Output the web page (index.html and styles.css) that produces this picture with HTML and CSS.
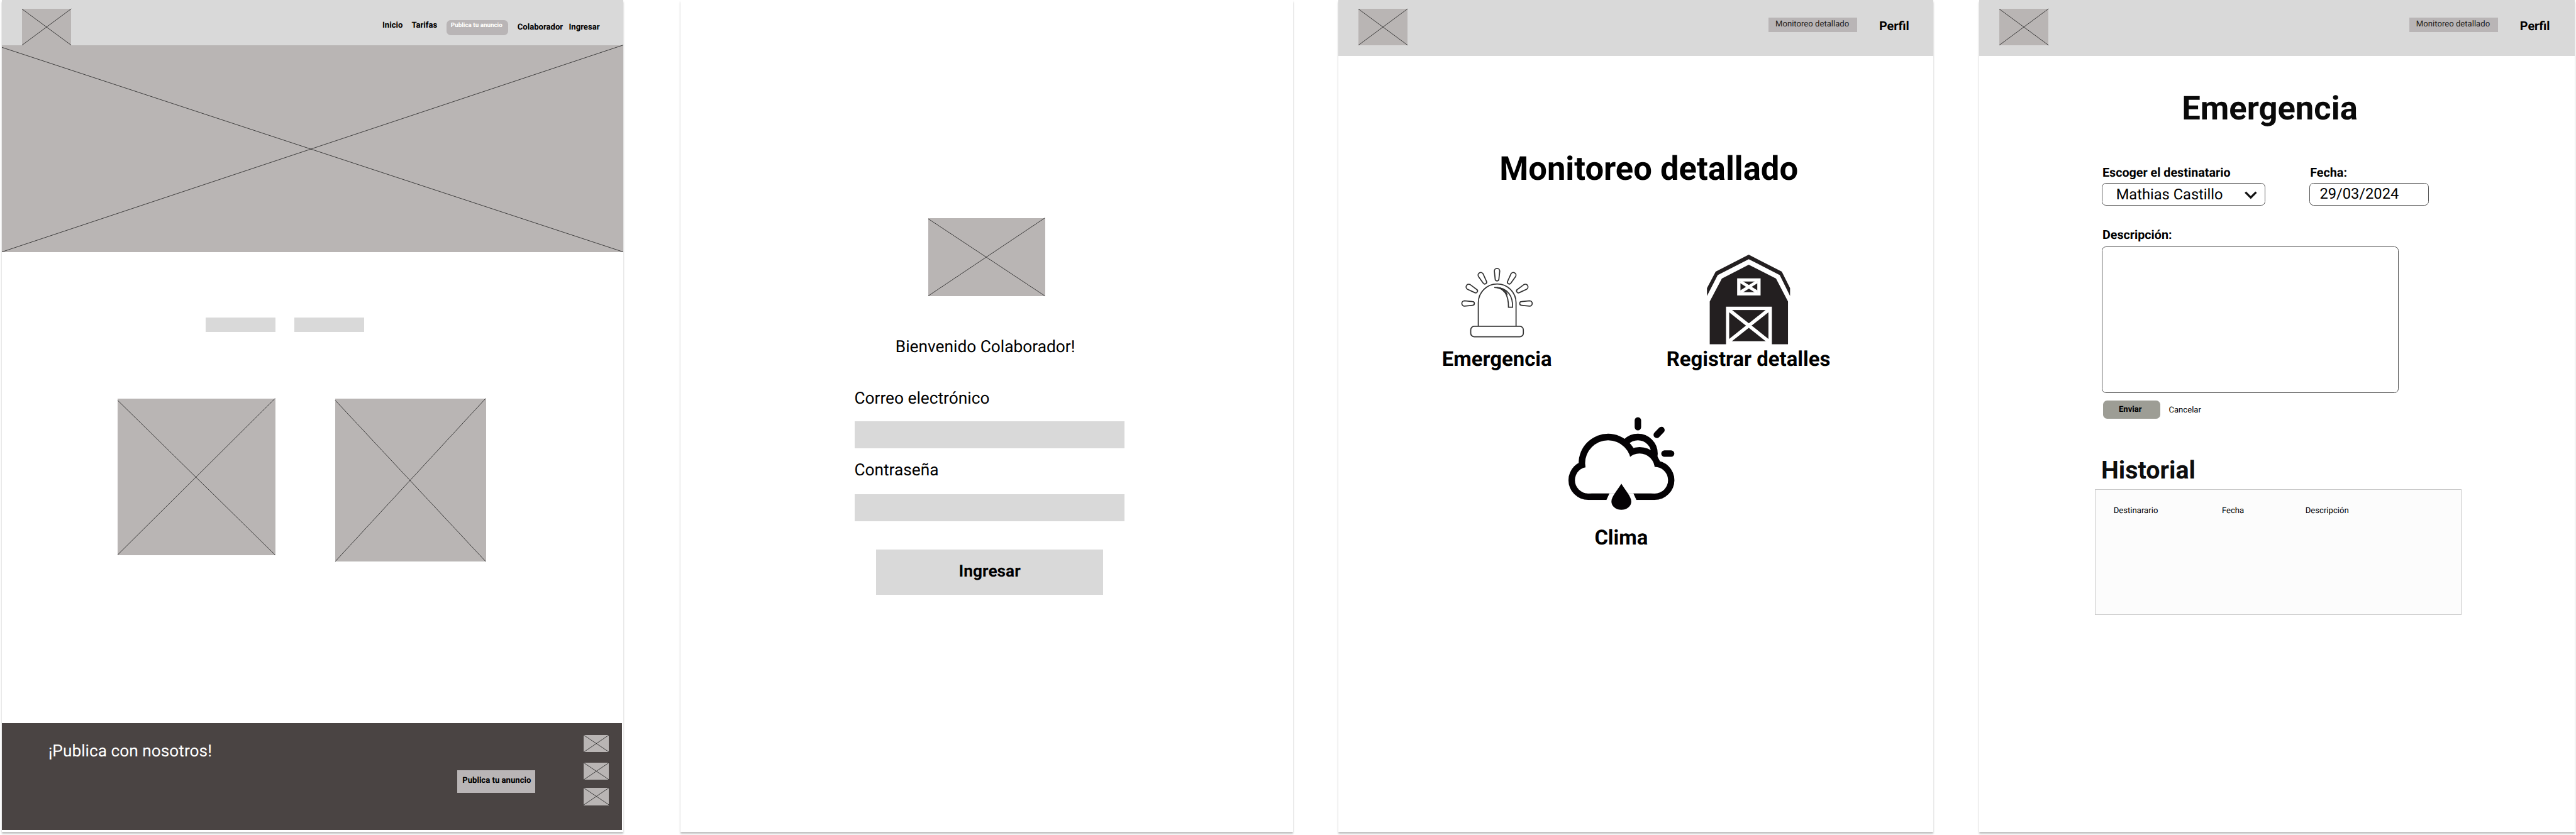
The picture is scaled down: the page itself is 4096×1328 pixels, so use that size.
FILE: index.html
```html
<!DOCTYPE html>
<html lang="es">
<head>
<meta charset="utf-8">
<title>Wireframes</title>
<link rel="stylesheet" href="styles.css">
</head>
<body>
<main class="canvas">

  <section class="board board-home">
    <header class="bar bar-home">
      <div class="ph ph-logo"><svg viewBox="0 0 119 88"><path d="M0 .5L119 88M119 0L0 88"/></svg></div>
      <a class="nav nav-high">Inicio</a>
      <a class="nav nav-high">Tarifas</a>
      <a class="nav-cta">Publica tu anuncio</a>
      <a class="nav nav-low">Colaborador</a>
      <a class="nav nav-mid">Ingresar</a>
    </header>
    <div class="ph ph-hero"><svg viewBox="0 0 1503 500"><path d="M0 5L1503 500M1503 -.5L0 500"/></svg></div>
    <div class="chips"><span class="chip"></span><span class="chip"></span></div>
    <div class="cards">
      <div class="ph ph-card-a"><svg viewBox="0 0 381 378"><path d="M0 4L381 378M381 -.5L0 378"/></svg></div>
      <div class="ph ph-card-b"><svg viewBox="0 0 364 394"><path d="M0 4L364 394M364 -.5L0 394"/></svg></div>
    </div>
    <footer class="footer">
      <p class="footer-title">¡Publica con nosotros!</p>
      <a class="footer-cta">Publica tu anuncio</a>
      <div class="socials">
        <div class="ph ph-social"><svg viewBox="0 0 62 42"><path d="M0 0L62 41.5M62 -.5L0 41.5"/></svg></div>
        <div class="ph ph-social"><svg viewBox="0 0 62 42"><path d="M0 0L62 41.5M62 -.5L0 41.5"/></svg></div>
        <div class="ph ph-social ph-social-last"><svg viewBox="0 0 62 42"><path d="M0 0L62 41.5M62 -.5L0 41.5"/></svg></div>
      </div>
    </footer>
  </section>

  <section class="board board-login">
    <div class="ph ph-login"><svg viewBox="0 0 282 188"><path d="M0 1.5L282 188M282 -.5L0 188"/></svg></div>
    <p class="welcome">Bienvenido Colaborador!</p>
    <p class="login-label">Correo electrónico</p>
    <div class="login-input"></div>
    <p class="login-label login-label-second">Contraseña</p>
    <div class="login-input login-input-second"></div>
    <div class="login-submit">Ingresar</div>
  </section>

  <section class="board board-monitor">
    <header class="bar bar-app">
      <div class="ph ph-logo"><svg viewBox="0 0 119 88"><path d="M0 .5L119 88M119 0L0 88"/></svg></div>
      <a class="tag">Monitoreo detallado</a>
      <a class="profile">Perfil</a>
    </header>
    <h1 class="title title-monitor">Monitoreo detallado</h1>
    <div class="options">
      <div class="option">
        <svg class="icon-lamp" viewBox="0 0 630 630">
          <defs><path id="ray" d="M-19.5 0A19.5 19.5 0 0 1 19.5 0L13.5 58A13.5 13.5 0 0 1-13.5 58Z"/></defs>
          <path d="M167 478V308a137 136 0 0 1 274 0V478"/>
          <rect x="112" y="479" width="382" height="76" rx="26"/>
          <path d="M283 197C350 198 387 245 386 341H416C418 270 390 196 283 197Z"/>
          <path d="M300 197C345 203 366 222 377 250C366 220 345 200 300 197Z"/>
          <use href="#ray" transform="translate(67 313) rotate(-90)"/>
          <use href="#ray" transform="translate(98 193) rotate(-59)"/>
          <use href="#ray" transform="translate(185 108) rotate(-30)"/>
          <use href="#ray" transform="translate(303 78)"/>
          <use href="#ray" transform="translate(421 108) rotate(30)"/>
          <use href="#ray" transform="translate(508 193) rotate(59)"/>
          <use href="#ray" transform="translate(539 313) rotate(90)"/>
        </svg>
        <p class="option-label">Emergencia</p>
      </div>
      <div class="option">
        <svg class="icon-barn" viewBox="0 0 690 690">
          <g fill="#231f20">
            <path d="M345 32L585 155L645 275V332L570 180L345 65L120 180L42 332V275L105 155Z"/>
            <path d="M345 105L543 205L630 372V682H513V410H180V682H62V372L150 205Z"/>
          </g>
          <rect x="261" y="204" width="170" height="124" fill="#fff"/>
          <rect x="285" y="227" width="122" height="77" fill="#231f20"/>
          <rect x="203" y="434" width="285" height="226" fill="#231f20"/>
          <path d="M285 227L407 304M407 227L285 304" stroke="#fff" stroke-width="22"/>
          <path d="M203 434L488 660M488 434L203 660" stroke="#fff" stroke-width="26"/>
        </svg>
        <p class="option-label">Registrar detalles</p>
      </div>
    </div>
    <div class="option option-weather">
      <svg class="icon-weather" viewBox="0 0 840 810">
        <circle cx="531" cy="294" r="120.5" fill="#fff" stroke="#040204" stroke-width="47"/>
        <g fill="#040204">
          <circle cx="315" cy="364" r="214"/><circle cx="543" cy="403" r="157"/>
          <circle cx="170" cy="487" r="143"/><circle cx="653" cy="487" r="143"/>
          <rect x="170" y="400" width="483" height="230"/>
        </g>
        <g fill="#fff">
          <circle cx="315" cy="364" r="167"/><circle cx="543" cy="403" r="110"/>
          <circle cx="170" cy="487" r="96"/><circle cx="653" cy="487" r="97"/>
          <rect x="165" y="391" width="488" height="192"/>
          <path d="M325 582H498L521 632H302Z"/>
        </g>
        <path fill="#040204" d="M411 512C438 558 483 605 483 642A72 60 0 0 1 339 642C339 605 384 558 411 512Z"/>
        <path stroke="#040204" stroke-width="47" stroke-linecap="round" d="M531 53V102M702 123L668 158M724 294H772"/>
      </svg>
      <p class="option-label">Clima</p>
    </div>
  </section>

  <section class="board board-alert">
    <header class="bar bar-app">
      <div class="ph ph-logo"><svg viewBox="0 0 119 88"><path d="M0 .5L119 88M119 0L0 88"/></svg></div>
      <a class="tag">Monitoreo detallado</a>
      <a class="profile">Perfil</a>
    </header>
    <h1 class="title title-alert">Emergencia</h1>
    <form class="form">
      <div class="fields">
        <div>
          <p class="field-label">Escoger el destinatario</p>
          <div class="field field-select"><span>Mathias Castillo</span>
            <svg class="chevron" viewBox="0 0 30 20"><path d="M2 2.5L15 15.5L28 2.5"/></svg>
          </div>
        </div>
        <div>
          <p class="field-label">Fecha:</p>
          <div class="field field-date">29/03/2024</div>
        </div>
      </div>
      <p class="field-label field-label-desc">Descripción:</p>
      <div class="textarea"></div>
      <div class="actions"><span class="send">Enviar</span><span class="cancel">Cancelar</span></div>
      <h2 class="history-title">Historial</h2>
    </form>
    <div class="history"><span>Destinarario</span><span>Fecha</span><span>Descripción</span></div>
  </section>

</main>
</body>
</html>
```
FILE: styles.css
```css
/* 1rem equals 100 design units */
html { font-size: 65.736px; }
* { box-sizing: border-box; }
body { margin: 0; background: #fff; color: #000; font-family: Roboto, "Liberation Sans", sans-serif; overflow: hidden; text-rendering: geometricPrecision; }
p, h1, h2 { margin: 0; font-weight: 400; }
svg { display: block; overflow: visible; fill: none; }

.canvas { display: flex; width: 4096px; height: 1328px; padding-left: .04rem; line-height: 1.2; white-space: nowrap; }
.board { flex: none; display: flex; flex-direction: column; align-items: flex-start; height: 20.12rem; background: #fff; box-shadow: 0 .04rem .04rem rgba(0, 0, 0, .25); }
.board-home { width: 15.03rem; }
.board-login { width: 14.81rem; margin-left: 1.39rem; }
.board-monitor { width: 14.4rem; margin-left: 1.1rem; }
.board-alert { width: 14.41rem; margin-left: 1.1rem; }

/* crossed image placeholders */
.ph { flex: none; background: #b9b5b4; }
.ph svg { width: 100%; height: 100%; stroke: #1c1c1c; stroke-width: 1.2; }
.ph-logo { width: 1.19rem; height: .88rem; margin-top: .22rem; }
.ph-hero { width: 15.03rem; height: 5rem; }
.ph-card-a { width: 3.81rem; height: 3.78rem; }
.ph-card-b { width: 3.64rem; height: 3.94rem; }
.ph-social { width: .62rem; height: .42rem; }
.ph-social-last { margin-top: -.05rem; }
.ph-login { width: 2.82rem; height: 1.88rem; margin: 5.28rem 0 0 6rem; }

/* top bars */
.bar { display: grid; align-items: start; width: 100%; padding-left: .49rem; background: #d9d9d9; }
.bar-home { height: 1.1rem; grid-template-columns: 8.72rem .705rem .845rem 1.715rem 1.245rem auto; }
.nav { font-size: .2rem; font-weight: 700; }
.nav-high { margin-top: .502rem; }
.nav-mid { margin-top: .542rem; }
.nav-low { margin-top: .552rem; }
.nav-cta { width: 1.49rem; height: .37rem; margin-top: .48rem; padding: .059rem 0 0 .105rem; border-radius: .1rem; background: #b9b5b6; color: #fff; font-size: .15rem; font-weight: 700; }
.bar-app { height: 1.36rem; grid-template-columns: 9.92rem 2.675rem auto; }
.tag { width: 2.15rem; height: .36rem; margin-top: .42rem; padding: .052rem 0 0 .165rem; background: #b9b5b6; color: #1c1c1c; font-size: .2rem; }
.profile { margin-top: .457rem; font-size: .3rem; font-weight: 700; }

/* home */
.chips { display: flex; gap: .46rem; margin: 1.59rem 0 0 4.935rem; }
.chip { width: 1.69rem; height: .34rem; background: #d9d9d9; }
.cards { display: flex; align-items: flex-start; gap: 1.455rem; margin: 1.62rem 0 0 2.81rem; }
.footer { display: grid; grid-template-columns: 9.89rem 3.05rem auto; align-items: start; width: 15rem; height: 2.58rem; margin-top: 3.91rem; padding-left: 1.13rem; background: #4a4443; }
.footer-title { margin-top: .453rem; color: #fff; font-size: .4rem; }
.footer-cta { width: 1.89rem; height: .56rem; margin-top: 1.13rem; padding: .142rem 0 0 .125rem; background: #b9b5b6; font-size: .2rem; font-weight: 700; }
.socials { display: grid; gap: .25rem; margin-top: .28rem; }

/* login */
.welcome { margin: 1.013rem 0 0 5.2rem; font-size: .4rem; }
.login-label { margin: .77rem 0 0 4.205rem; font-size: .4rem; }
.login-input { width: 6.53rem; height: .66rem; margin: .287rem 0 0 4.21rem; background: #d9d9d9; }
.login-label-second { margin-top: .303rem; }
.login-input-second { margin-top: .327rem; }
.login-submit { width: 5.5rem; height: 1.09rem; margin: .68rem 0 0 4.73rem; padding-top: .303rem; background: #d9d9d9; font-size: .4rem; font-weight: 700; text-align: center; }

/* monitoring menu */
.title { font-size: .8rem; font-weight: 700; }
.title-monitor { margin: 2.246rem 0 0 3.9rem; }
.options { display: grid; grid-template-columns: 5.43rem auto; align-items: end; margin: 1.484rem 0 0 2.51rem; }
.option-label { font-size: .5rem; font-weight: 700; }
.icon-lamp { width: 2.1rem; height: 2.1rem; margin: 0 0 .01rem .32rem; stroke: #333; stroke-width: 8; }
.icon-barn { width: 2.3rem; height: 2.3rem; margin: 0 0 .06rem .84rem; }
.option-weather { margin: .99rem 0 0 5.48rem; }
.icon-weather { width: 2.8rem; height: 2.7rem; margin-bottom: .04rem; }
.option-weather .option-label { padding-left: .72rem; }

/* emergency form */
.title-alert { margin: .786rem 0 0 4.905rem; color: #0a0a0a; }
.form { margin: .901rem 0 0 2.965rem; }
.fields { display: grid; grid-template-columns: 5.025rem auto; }
.field-label { padding-left: .02rem; font-size: .3rem; font-weight: 700; }
.field { height: .55rem; margin-top: .063rem; border: 1px solid #555; border-radius: .1rem; font-size: .36rem; }
.field-select { display: flex; justify-content: space-between; width: 3.955rem; padding: .042rem .18rem 0 .335rem; }
.field-date { width: 2.89rem; padding: .028rem 0 0 .235rem; }
.chevron { width: .3rem; height: .2rem; margin-top: .145rem; stroke: #111; stroke-width: 5; }
.field-label-desc { margin-top: .527rem; }
.textarea { width: 7.18rem; height: 3.55rem; margin-top: .093rem; border: 1px solid #555; border-radius: .1rem; }
.actions { display: flex; align-items: flex-start; margin: .18rem 0 0 .035rem; font-size: .2rem; }
.send { width: 1.38rem; height: .44rem; padding: .112rem 0 0 .38rem; border-radius: .1rem; background: #9d9d95; font-weight: 700; }
.cancel { margin: .122rem 0 0 .21rem; }
.history-title { margin: .885rem 0 0 -.01rem; color: #0e0e0e; font-size: .6rem; font-weight: 700; }
.history { display: grid; grid-template-columns: 2.62rem 2.02rem auto; width: 8.86rem; height: 3.05rem; margin: .095rem 0 0 2.81rem; padding: .395rem 0 0 .43rem; border: 1px solid #cacaca; background: #fcfcfc; font-size: .2rem; }
```
